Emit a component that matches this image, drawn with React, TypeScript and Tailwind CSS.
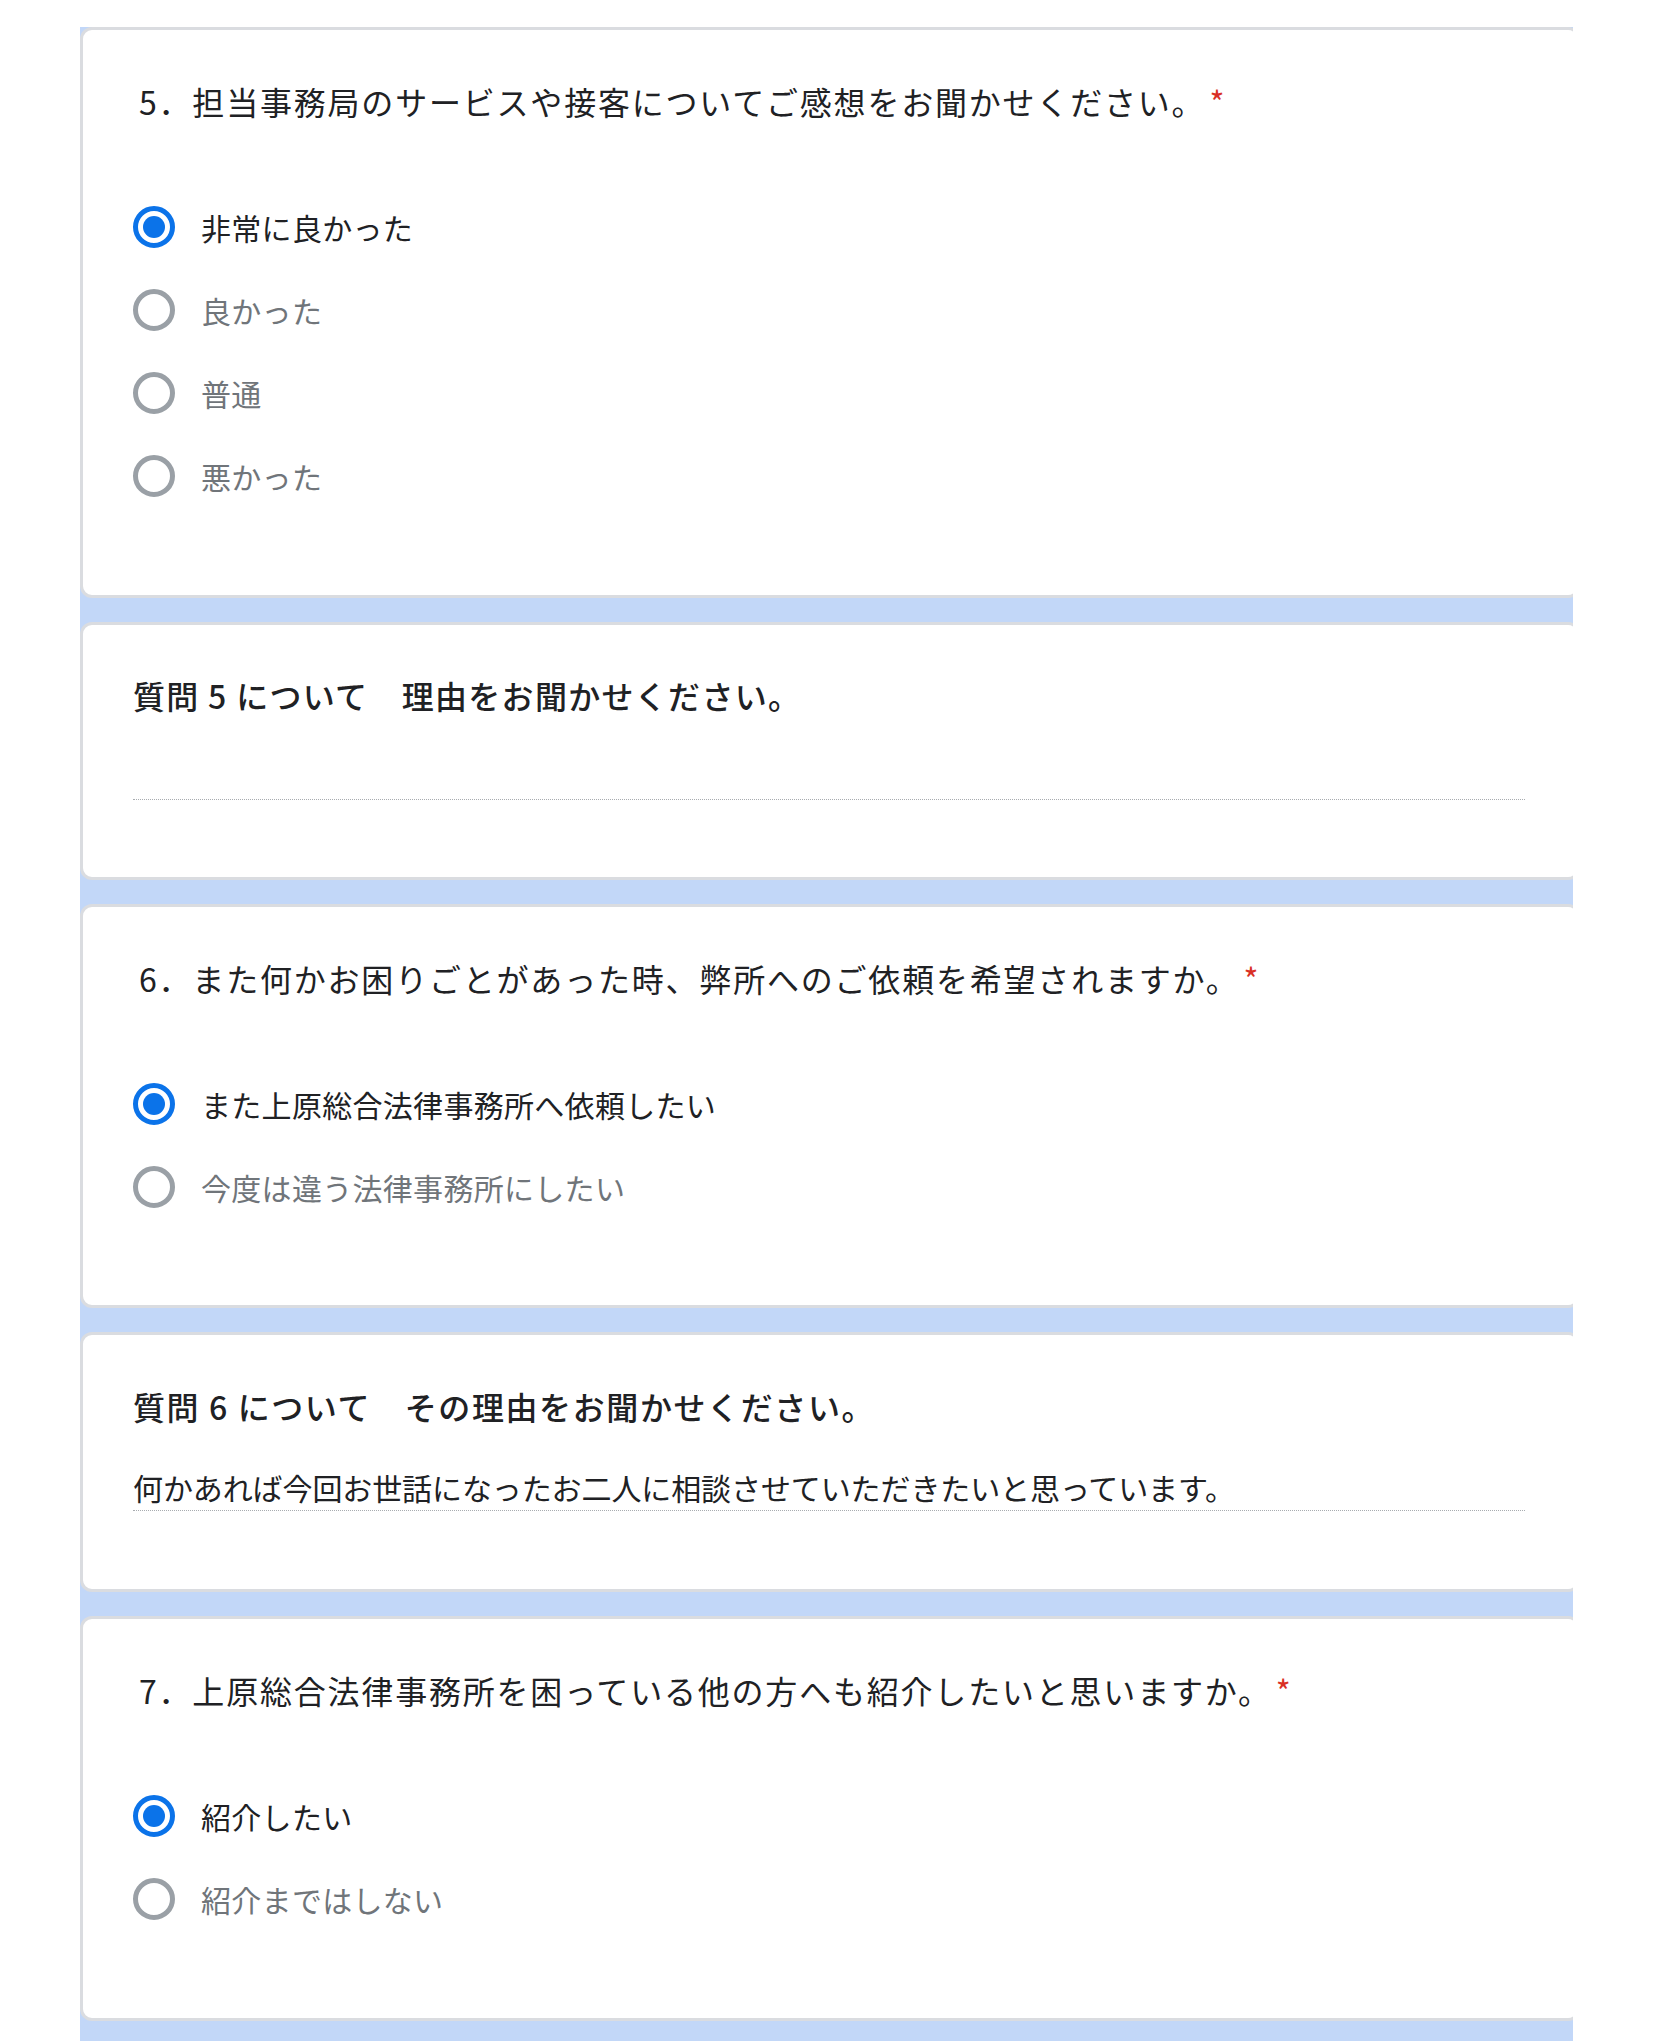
import React from 'react';

type Option = { label: string; checked?: boolean };

const Radio: React.FC<Option> = ({ label, checked }) => (
  <div className="flex items-center h-[83px]">
    <span
      className={
        checked
          ? 'flex items-center justify-center w-[42px] h-[42px] rounded-full border-[5px] border-[#0b73e9]'
          : 'flex items-center justify-center w-[42px] h-[42px] rounded-full border-[5px] border-[#9aa0a6]'
      }
    >
      {checked && <span className="w-[22px] h-[22px] rounded-full bg-[#0b73e9]" />}
    </span>
    <span
      className={
        checked
          ? 'ml-[26px] text-[30px] leading-[40px] tracking-[0.3px] text-[#202124]'
          : 'ml-[26px] text-[30px] leading-[40px] tracking-[0.3px] text-[#70757a]'
      }
    >
      {label}
    </span>
  </div>
);

const Question: React.FC<{ title: string; options: Option[]; height: string }> = ({
  title,
  options,
  height,
}) => (
  <div
    className={`${height} w-[1500px] shrink-0 bg-white border-[3px] border-[#dadce0] rounded-[12px] pl-[50px] pt-[47px]`}
  >
    <div className="pl-[6px] text-[32px] leading-[48px] tracking-[1.8px] text-[#202124]">
      {title}
      <span className="ml-[4px] text-[#d93025]">*</span>
    </div>
    <div className="mt-[60px] flex flex-col">
      {options.map((o) => (
        <Radio key={o.label} {...o} />
      ))}
    </div>
  </div>
);

export default function App() {
  return (
    <div className="min-h-[2041px] bg-white pt-[27px] pl-[80px] font-['Noto_Sans_CJK_JP','Noto_Sans',sans-serif]">
      <div className="w-[1493px] overflow-hidden bg-[#c2d7f8] flex flex-col gap-[24px] pb-[36px]">
        <Question
          height="h-[571px]"
          title="5．担当事務局のサービスや接客についてご感想をお聞かせください。"
          options={[
            { label: '非常に良かった', checked: true },
            { label: '良かった' },
            { label: '普通' },
            { label: '悪かった' },
          ]}
        />

        {/* reason for 5 */}
        <div className="h-[258px] w-[1500px] shrink-0 bg-white border-[3px] border-[#dadce0] rounded-[12px] pl-[50px] pt-[46px]">
          <div className="text-[32px] leading-[48px] tracking-[1.3px] font-medium text-[#202124]">
            質問 5 について　理由をお聞かせください。
          </div>
          <div className="mt-[80px] w-[1392px] border-t border-dotted border-[#a8acb0]" />
        </div>

        <Question
          height="h-[404px]"
          title="6．また何かお困りごとがあった時、弊所へのご依頼を希望されますか。"
          options={[
            { label: 'また上原総合法律事務所へ依頼したい', checked: true },
            { label: '今度は違う法律事務所にしたい' },
          ]}
        />

        {/* reason for 6 */}
        <div className="h-[260px] w-[1500px] shrink-0 bg-white border-[3px] border-[#dadce0] rounded-[12px] pl-[50px] pt-[47px]">
          <div className="text-[32px] leading-[48px] tracking-[1.6px] font-medium text-[#202124]">
            質問 6 について　その理由をお聞かせください。
          </div>
          <div className="mt-[37px] w-[1392px] pb-[3px] border-b border-dotted border-[#a8acb0] text-[30px] leading-[40px] tracking-[-0.1px] text-[#202124]">
            何かあれば今回お世話になったお二人に相談させていただきたいと思っています。
          </div>
        </div>

        <Question
          height="h-[405px]"
          title="7．上原総合法律事務所を困っている他の方へも紹介したいと思いますか。"
          options={[{ label: '紹介したい', checked: true }, { label: '紹介まではしない' }]}
        />
      </div>
    </div>
  );
}
